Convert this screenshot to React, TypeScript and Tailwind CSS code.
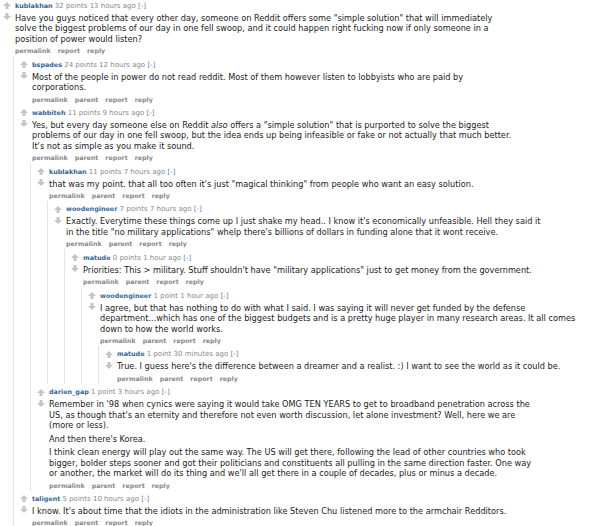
import type { ReactNode } from "react";

interface Comment {
  user: string;
  points: string;
  age: string;
  // paragraphs, each a list of lines as they wrap in the thread
  body: ReactNode[][];
  top?: boolean;
  replies?: Comment[];
}

const thread: Comment = {
  user: "kublakhan",
  points: "32 points",
  age: "13 hours ago",
  top: true,
  body: [
    [
      'Have you guys noticed that every other day, someone on Reddit offers some "simple solution" that will immediately',
      "solve the biggest problems of our day in one fell swoop, and it could happen right fucking now if only someone in a",
      "position of power would listen?",
    ],
  ],
  replies: [
    {
      user: "bspades",
      points: "24 points",
      age: "12 hours ago",
      body: [
        [
          "Most of the people in power do not read reddit. Most of them however listen to lobbyists who are paid by",
          "corporations.",
        ],
      ],
    },
    {
      user: "wabbiteh",
      points: "11 points",
      age: "9 hours ago",
      body: [
        [
          <>
            Yes, but every day someone else on Reddit <em>also</em> offers a "simple solution" that is purported to solve
            the biggest
          </>,
          "problems of our day in one fell swoop, but the idea ends up being infeasible or fake or not actually that much better.",
          "It's not as simple as you make it sound.",
        ],
      ],
      replies: [
        {
          user: "kublakhan",
          points: "11 points",
          age: "7 hours ago",
          body: [['that was my point. that all too often it\'s just "magical thinking" from people who want an easy solution.']],
          replies: [
            {
              user: "woodengineer",
              points: "7 points",
              age: "7 hours ago",
              body: [
                [
                  "Exactly. Everytime these things come up I just shake my head.. I know it's economically unfeasible. Hell they said it",
                  'in the title "no military applications" whelp there\'s billions of dollars in funding alone that it wont receive.',
                ],
              ],
              replies: [
                {
                  user: "matude",
                  points: "0 points",
                  age: "1 hour ago",
                  body: [['Priorities: This > military. Stuff shouldn\'t have "military applications" just to get money from the government.']],
                  replies: [
                    {
                      user: "woodengineer",
                      points: "1 point",
                      age: "1 hour ago",
                      body: [
                        [
                          "I agree, but that has nothing to do with what I said. I was saying it will never get funded by the defense",
                          "department...which has one of the biggest budgets and is a pretty huge player in many research areas. It all comes",
                          "down to how the world works.",
                        ],
                      ],
                      replies: [
                        {
                          user: "matude",
                          points: "1 point",
                          age: "30 minutes ago",
                          body: [
                            ["True. I guess here's the difference between a dreamer and a realist. :) I want to see the world as it could be."],
                          ],
                        },
                      ],
                    },
                  ],
                },
              ],
            },
          ],
        },
        {
          user: "darien_gap",
          points: "1 point",
          age: "3 hours ago",
          body: [
            [
              "Remember in '98 when cynics were saying it would take OMG TEN YEARS to get to broadband penetration across the",
              "US, as though that's an eternity and therefore not even worth discussion, let alone investment? Well, here we are",
              "(more or less).",
            ],
            ["And then there's Korea."],
            [
              "I think clean energy will play out the same way. The US will get there, following the lead of other countries who took",
              "bigger, bolder steps sooner and got their politicians and constituents all pulling in the same direction faster. One way",
              "or another, the market will do its thing and we'll all get there in a couple of decades, plus or minus a decade.",
            ],
          ],
        },
      ],
    },
    {
      user: "taligent",
      points: "5 points",
      age: "10 hours ago",
      body: [["I know. It's about time that the idiots in the administration like Steven Chu listened more to the armchair Redditors."]],
    },
  ],
};

function Arrow({ down }: { down?: boolean }) {
  return (
    <svg width="8" height="7" viewBox="0 0 8 7" className={down ? "rotate-180" : ""}>
      <path d="M4 0L8 4H5.5V7H2.5V4H0Z" fill="#c4c4c4" />
    </svg>
  );
}

function CommentView({ c }: { c: Comment }) {
  const buttons = c.top ? ["permalink", "report", "reply"] : ["permalink", "parent", "report", "reply"];
  return (
    <div className="pt-[3.3px]">
      <div className="flex">
        <div className="flex w-[15px] shrink-0 flex-col gap-[4px] pl-[3px] pt-[1.5px]">
          <Arrow />
          <Arrow down />
        </div>
        <div className="min-w-0 flex-1">
          <p className="text-[7px] leading-[10px] text-[#888]">
            <span className="text-[6.4px] font-bold text-[#336699]">{c.user}</span> {c.points} {c.age}{" "}
            <span className="text-[#5f7fa6]">[-]</span>
          </p>
          <div className="mt-[2px] flex flex-col gap-[3px] whitespace-nowrap text-[8.2px] leading-[10.5px] text-[#222]">
            {c.body.map((para, i) => (
              <p key={i}>
                {para.map((line, j) => (
                  <span key={j}>
                    {line}
                    {j < para.length - 1 && <br />}
                  </span>
                ))}
              </p>
            ))}
          </div>
          <div className="mt-[2px] flex gap-[7px] text-[6.3px] font-bold leading-[10px] text-[#888]">
            {buttons.map((b) => (
              <span key={b}>{b}</span>
            ))}
          </div>
        </div>
      </div>
      {c.replies && (
        <div className="ml-[13px] border-l border-[#e4e4e4] pl-[3px]">
          {c.replies.map((r, i) => (
            <CommentView key={i} c={r} />
          ))}
        </div>
      )}
    </div>
  );
}

export default function App() {
  return (
    <div className="h-[526px] w-[600px] overflow-hidden bg-white font-['DejaVu_Sans',Verdana,sans-serif]">
      <div className="-mt-[2.5px]">
        <CommentView c={thread} />
      </div>
    </div>
  );
}
